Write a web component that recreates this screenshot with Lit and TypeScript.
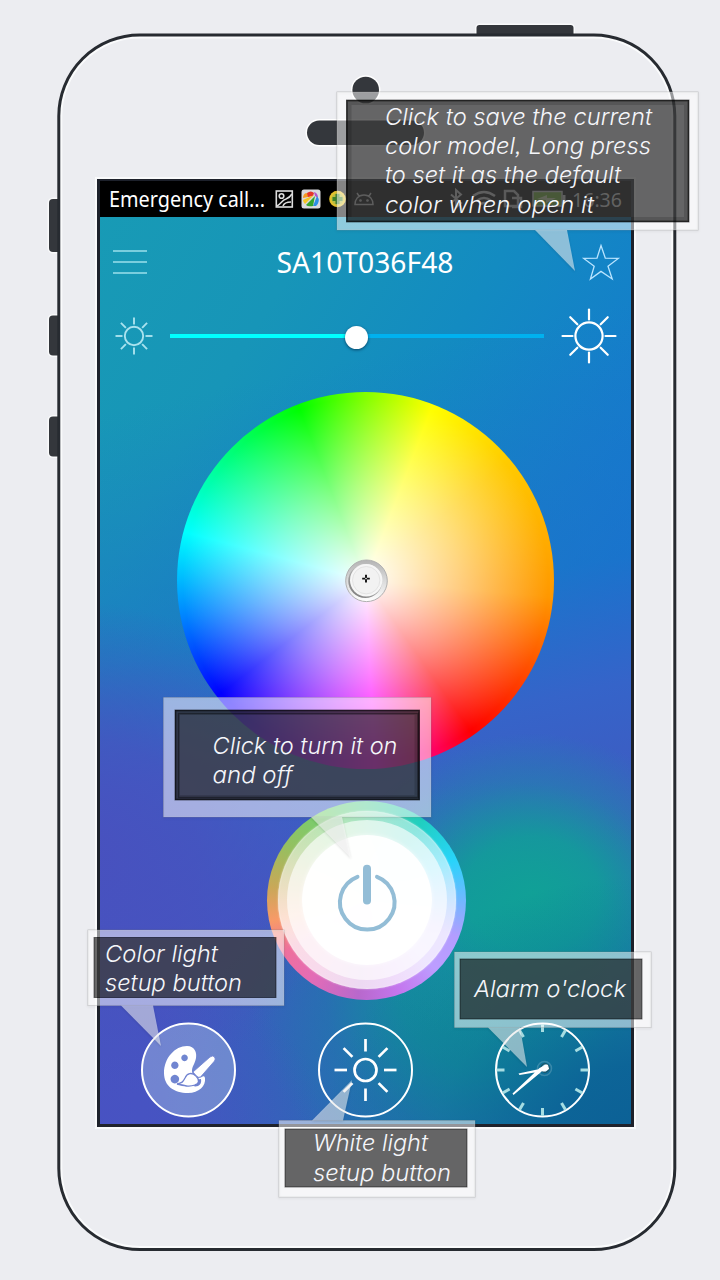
import { LitElement, html, svg, css } from "lit";
import { customElement } from "lit/decorators.js";

interface Line { t: string; x: number; y: number; w: number }
interface Note { box: number[]; inner: number[]; tail: string; bevel: boolean; lines: Line[] }

const notes: Note[] = [
  { box: [337, 92, 361, 138], inner: [346.5, 100, 342.5, 122], tail: "535,230 567,230 575,271", bevel: false, lines: [
    { t: "Click to save the current", x: 385, y: 125, w: 267 },
    { t: "color model, Long press", x: 385, y: 154, w: 266 },
    { t: "to set it as the default", x: 385, y: 183, w: 236 },
    { t: "color when open it", x: 385, y: 212.5, w: 209 }] },
  { box: [163.5, 697.5, 267.5, 119.5], inner: [175, 710, 244.5, 90], tail: "311,817 342,817 351,858", bevel: true, lines: [
    { t: "Click to turn it on", x: 212.5, y: 753.5, w: 185 },
    { t: "and off", x: 212.5, y: 782.5, w: 80 }] },
  { box: [88, 930, 196, 75.5], inner: [94, 937.5, 182, 60], tail: "121,1005.5 153,1005.5 161,1046", bevel: false, lines: [
    { t: "Color light", x: 105, y: 961.5, w: 113 },
    { t: "setup button", x: 105, y: 991, w: 137 }] },
  { box: [279, 1120.5, 196, 76.5], inner: [285, 1129, 182, 58], tail: "312,1120.5 343,1120.5 352,1080", bevel: false, lines: [
    { t: "White light", x: 313, y: 1151, w: 115 },
    { t: "setup button", x: 313, y: 1181, w: 138 }] },
  { box: [454.5, 952, 196.5, 75.5], inner: [460, 959, 182, 60], tail: "488,1027.5 520,1027.5 527,1067", bevel: false, lines: [
    { t: "Alarm o'clock", x: 474, y: 997, w: 152 }] },
];

const rays = (cx: number, cy: number, a: number, b: number) =>
  Array.from({ length: 8 }, (_, i) => {
    const c = Math.cos((i * Math.PI) / 4), s = Math.sin((i * Math.PI) / 4);
    return svg`<line x1=${cx + a * c} y1=${cy + a * s} x2=${cx + b * c} y2=${cy + b * s}></line>`;
  });

@customElement("color-wheel")
class ColorWheel extends LitElement {
  static styles = css`
    :host { display: grid; place-items: center; width: 377px; height: 377px; border-radius: 50%;
      background: radial-gradient(circle closest-side, #fff 0%, rgba(255,255,255,.5) 50%, rgba(255,255,255,0) 97%),
        conic-gradient(#84ff00 0deg, #ff0 21deg, #ffcb00 50deg, #ff9800 95deg, #ff4a00 120deg, #f00 145deg, #ff0070 160deg, #f0f 177deg, #7a00ff 205deg, #00f 232deg, #0080ff 258deg, #0ff 285deg, #00ff80 312deg, #0f0 339deg, #84ff00 360deg); }
    svg { display: block; }
  `;
  render() {
    return html`<svg width="46" height="46" viewBox="0 0 46 46">
      <defs>
        <linearGradient id="r" x1="0" y1="0" x2="0" y2="1"><stop offset="0" stop-color="#b4b4b4"></stop><stop offset=".55" stop-color="#dedede"></stop><stop offset="1" stop-color="#fff"></stop></linearGradient>
        <linearGradient id="q" x1="0.1" y1="1" x2=".8" y2="0"><stop offset="0" stop-color="#777"></stop><stop offset=".5" stop-color="#aaa"></stop><stop offset="1" stop-color="#eee"></stop></linearGradient>
      </defs>
      <circle cx="23.5" cy="23.8" r="20.8" fill="url(#r)" stroke="#b0b0b0" stroke-width="1"></circle>
      <circle cx="22.3" cy="24" r="17" fill="url(#q)"></circle>
      <circle cx="23.2" cy="23.2" r="16.2" fill="#f6f6f6"></circle>
      <circle cx="23.2" cy="23.2" r="13.7" fill="#f2f2f2" stroke="#e4e4e4" stroke-width="1"></circle>
      <path d="M23 17.800v7.600M19.200 21.600h7.600" stroke="#111" stroke-width="1.900"></path><circle cx="23" cy="21.600" r=".8" fill="#fff"></circle>
    </svg>`;
  }
}

@customElement("power-button")
class PowerButton extends LitElement {
  static styles = css`
    :host { display: grid; place-items: center; width: 199px; height: 199px; border-radius: 50%;
      background: conic-gradient(#5bd09a 0deg, #20cfc0 35deg, #28d4fa 65deg, #62bdff 85deg, #b39dff 112deg, #bd9dff 135deg, #c476ee 160deg, #b868cc 185deg, #e36cb6 215deg, #ee709c 238deg, #f89a68 258deg, #c9a858 278deg, #94c060 305deg, #73d070 335deg, #5bd09a 360deg); }
    .ring { display: grid; place-items: center; border-radius: 50%; }
    .a { width: 178px; height: 178px; background: radial-gradient(circle at 46% 52%, rgba(255,255,255,.75) 75%, rgba(255,255,255,.6) 100%); background: linear-gradient(rgba(255,255,255,.45), rgba(255,255,255,.75) 70%); box-shadow: 0 0 2px rgba(255,255,255,.6), inset 0 0 2px rgba(255,255,255,.7); }
    .b { width: 160px; height: 160px; background: rgba(255,255,255,.62); }
    .c { width: 130px; height: 130px; background: rgba(255,255,255,.94); box-shadow: 0 0 5px rgba(255,255,255,.6); }
    svg { display: block; }
  `;
  render() {
    return html`<div class="ring a"><div class="ring b"><div class="ring c">
      <svg width="70" height="76" viewBox="332 862 70 76" fill="none" stroke="#93bdd6" stroke-linecap="round">
        <path d="M357.500 876.800A27.300 27.300 0 1 0 377 876.800" stroke-width="4"></path>
        <path d="M367 868.800V900.500" stroke-width="8"></path>
      </svg></div></div></div>`;
  }
}

@customElement("callout-note")
class CalloutNote extends LitElement {
  static properties = { note: { attribute: false } };
  declare note: Note;
  static styles = css`
    :host { position: absolute; inset: 0; pointer-events: none; }
    svg { display: block; }
    .frame { fill: rgba(255,255,255,.52); }
    .tail { filter: drop-shadow(0 1px 1px rgba(0,0,0,.22)); }
    .edge { fill: none; stroke: rgba(130,130,130,.35); stroke-width: 1; filter: drop-shadow(0 1px 1px rgba(0,0,0,.25)); }
    .panel { fill: rgba(61,61,61,.774); stroke: rgba(0,0,0,.5); stroke-width: 1; }
    .glow { fill: none; stroke: rgba(0,0,0,.14); stroke-width: 5; }
    .bevel { fill: none; stroke: rgba(0,0,0,.4); stroke-width: 1.5; }
    .soft { fill: none; stroke: rgba(0,0,0,.45); stroke-width: 1.5; }
    text { font: italic 300 23px Inter, "Liberation Sans", sans-serif; font-feature-settings: "cv11", "ss03"; fill: #f5f6fa; }
  `;
  render() {
    const { box: [x, y, w, h], inner: [a, b, c, d], tail, lines, bevel } = this.note;
    const big = h > 100;
    return html`<svg width="720" height="1280" viewBox="0 0 720 1280">
      <rect class="edge" x=${x} y=${y} width=${w} height=${h}></rect>
      <path class="frame" fill-rule="evenodd" d="M${x} ${y}h${w}v${h}h${-w}zM${a} ${b}v${d}h${c}v${-d}z"></path>
      <polygon class="frame tail" points=${tail}></polygon>
      <rect class="panel" x=${a} y=${b} width=${c} height=${d}></rect>
      ${big ? svg`<rect class="soft" x=${a + 0.75} y=${b + 0.75} width=${c - 1.5} height=${d - 1.5}></rect><rect class="glow" x=${a + 2.5} y=${b + 2.5} width=${c - 5} height=${d - 5}></rect>` : null}
      ${bevel ? svg`<path class="bevel" d="M${a + 3.5} ${b + d - 2.5}V${b + 3.5}H${a + c - 1.5}V${b + d - 2.5}z"></path>` : null}
      ${lines.map((l) => svg`<text x=${l.x} y=${l.y} textLength=${l.w} lengthAdjust="spacingAndGlyphs">${l.t}</text>`)}
    </svg>`;
  }
}

@customElement("app-root")
class AppRoot extends LitElement {
  static styles = css`
    :host { display: block; position: relative; box-sizing: border-box; width: 720px; height: 1280px; padding: 179px 0 0 97px; background: #ecedf1; overflow: hidden; font-family: "Noto Sans", "Open Sans", sans-serif; }
    svg { display: block; overflow: visible; }
    .shell { position: absolute; inset: 0; }
    .screen { position: relative; box-sizing: border-box; width: 537px; height: 948px; border: 3px solid #1d212b; border-top-width: 2px; border-bottom-color: #20232c; display: flex; flex-direction: column; box-shadow: 0 0 0 2px rgba(255,255,255,.7);
      background:
        radial-gradient(ellipse 330px 270px at 551px 964px, #0b6095 0%, rgba(11,98,150,.9) 30%, rgba(12,110,150,.4) 65%, rgba(16,120,160,0) 100%),
        radial-gradient(ellipse 190px 160px at 432px 712px, rgba(16,162,150,.95) 0%, rgba(16,160,152,.85) 35%, rgba(24,145,165,.45) 68%, rgba(40,120,185,0) 100%),
        radial-gradient(ellipse 250px 210px at 400px 810px, rgba(14,152,150,.95) 0%, rgba(14,148,152,.75) 40%, rgba(24,130,165,.35) 70%, rgba(40,110,180,0) 100%),
        radial-gradient(ellipse 390px 260px at 440px 900px, rgba(20,124,165,.8) 0%, rgba(30,115,175,.65) 50%, rgba(50,95,188,0) 100%),
        linear-gradient(168deg, rgba(24,120,200,0) 22%, rgba(32,112,200,.55) 46%, rgba(57,98,200,.9) 58%, rgba(60,94,196,.95) 64%, #4357c2 74%),
        linear-gradient(122deg, #189bb5 0%, #1795b8 22%, #138bc1 40%, #147ecb 58%, #1176d4 72%); }
    .screen::before { content: ""; position: absolute; inset: 0; background: radial-gradient(ellipse 260px 250px at -20px 670px, rgba(74,79,190,.9) 0%, rgba(73,80,190,.7) 45%, rgba(70,82,190,0) 100%), radial-gradient(ellipse 220px 150px at 0px 930px, rgba(74,80,194,.7), rgba(72,82,192,0)); }
    .screen > * { position: relative; }
    .status { display: flex; align-items: center; height: 35.5px; padding: 0 9px; background: #000; box-sizing: border-box; flex: none; }
    .head { display: flex; justify-content: space-between; align-items: center; height: 46px; padding: 22px 11px 0 13px; flex: none; }
    .slider { display: flex; align-items: center; height: 66px; padding: 18.5px 12px 0 14px; flex: none; }
    .track { display: flex; align-items: center; width: 374px; height: 4.5px; margin: 0 15px 0 15.5px; background: linear-gradient(90deg, #0ff 50%, #00b1ef 50%); flex: none; }
    .thumb { width: 23px; height: 23px; margin: 3px 0 0 175.5px; border-radius: 50%; background: #fff; box-shadow: 0 1px 3px rgba(0,30,60,.65); flex: none; }
    color-wheel { margin: 22.5px 0 0 77px; flex: none; }
    power-button { margin: 32px 0 0 167px; flex: none; }
    .nav { display: grid; grid-template-columns: repeat(3, 177px); padding-top: 22px; }
    .nav svg { margin: 0 auto; }
  `;
  render() {
    return html`
      <svg class="shell" width="720" height="1280" viewBox="0 0 720 1280">
        <g fill="#34373c" stroke="#f9fafb" stroke-width="3" paint-order="stroke">
          <path d="M476.500 36V28a3 3 0 0 1 3-3h91a3 3 0 0 1 3 3v8z"></path>
          <path d="M59 199h-6a4 4 0 0 0-4 4v45a4 4 0 0 0 4 4h6z"></path>
          <path d="M59 315.500h-6a4 4 0 0 0-4 4v32a4 4 0 0 0 4 4h6z"></path>
          <path d="M59 416.500h-6a4 4 0 0 0-4 4v32a4 4 0 0 0 4 4h6z"></path>
        </g>
        <rect x="58.800" y="35" width="616" height="1214.500" rx="81" fill="#ecedf1"></rect>
        <rect x="60.800" y="37" width="612" height="1210.500" rx="79" fill="none" stroke="#fafbfc" stroke-width="3"></rect>
        <rect x="58.800" y="35" width="616" height="1214.500" rx="81" fill="none" stroke="#272b31" stroke-width="3"></rect>
        <g fill="#34373c" stroke="#fff" stroke-width="3" paint-order="stroke">
          <circle cx="365.700" cy="90" r="13.300"></circle>
          <rect x="307" y="120.500" width="117" height="24.500" rx="12.250"></rect>
        </g>
      </svg>
      <main class="screen">
        <div class="status">
          <svg width="513" height="35" viewBox="109 181 513 35">
            <text x="109" y="207" font-size="21" fill="#fff" textLength="156" lengthAdjust="spacingAndGlyphs">Emergency call...</text>
            <g fill="none" stroke="#ddd" stroke-width="1.600"><rect x="276.300" y="191" width="16" height="16"></rect><circle cx="281.500" cy="196" r="2.300"></circle><path d="M277 206c4-2 5-6 9-7 3-1 4-2 6-5M283 206c1-3 4-4 8-4"></path></g>
            <rect x="301.500" y="189.500" width="19" height="19" rx="2.500" fill="#d9dadd"></rect>
            <g transform="translate(311 199)"><path d="M-8-1q0-4 3-5l3 1-1 3z" fill="#f59a22"></path><path d="M-4-6q4-3 7 0l-1 3-5 1z" fill="#e5352b"></path><path d="M3-7q4 1 4 6l-3-2z" fill="#b453c8"></path><path d="M6-3q4 5-1 10l-3 0z" fill="#2b8ee4"></path><path d="M4-3L2 7q-5 1-7-1z" fill="#33a42c"></path><path d="M3-4L-6 5q-2-2-2-4z" fill="#f5c624"></path></g>
            <circle cx="337.500" cy="199" r="8.300" fill="#e4c32d"></circle><circle cx="337.500" cy="199" r="6" fill="#b8bd43"></circle><path d="M337.500 194v10M332.500 199h10" stroke="#3b812c" stroke-width="4"></path>
            <g fill="none" stroke="#c9c9c9" stroke-width="1.500"><path d="M355 204.500c0-5 3-9.500 9-9.500s9 4.500 9 9.500zM359 196l-2-3M369 196l2-3"></path><circle cx="360.500" cy="200.500" r=".6"></circle><circle cx="367.500" cy="200.500" r=".6"></circle></g>
            <path d="M451 194.500l10 8.500-5 4.500V190l5 4.500-10 8.500" fill="none" stroke="#ccc" stroke-width="2"></path>
            <g fill="none" stroke="#ccc" stroke-width="2.500"><path d="M473 196q11-8 22 0M477 200.500q7-5 14 0M481 204q3-2 6 0"></path></g>
            <path d="M505 191h9l4 4v11h-13zM512 198h9v9h-9" fill="none" stroke="#bbb" stroke-width="2.500"></path>
            <rect x="533" y="191.500" width="29" height="14.500" fill="#6eb42a" stroke="#ccc" stroke-width="1.500"></rect><path d="M564 195v8" stroke="#ccc" stroke-width="3"></path><path d="M537 199l10-4v3h9l-10 5v-3z" fill="#d5e5b0"></path>
            <text x="572" y="207" font-size="20.500" fill="#ddd" textLength="50" lengthAdjust="spacingAndGlyphs">16:36</text>
          </svg>
        </div>
        <div class="head">
          <svg width="34" height="26" viewBox="0 0 34 26" stroke="#9be0ec" stroke-width="1.500"><path d="M0 2H34M0 13H34M0 24H34"></path></svg>
          <svg width="178" height="38" viewBox="-1.500 0 178 38"><text x="0" y="29.500" font-size="29" fill="#fff" textLength="177" lengthAdjust="spacingAndGlyphs">SA10T036F48</text></svg>
          <svg width="39" height="40" viewBox="581 242 39 40" fill="none" stroke="#b9e4ff" stroke-width="1.300"><path d="M601 245.500l4.300 12.600 13 .3-10.300 7.900 4.200 12.700-11.200-7.600-10.600 7.600 3.800-12.700-10.500-7.900 13.300-.3z"></path></svg>
        </div>
        <div class="slider">
          <svg width="40" height="40" viewBox="-20 -20 40 40" fill="none" stroke="#a9e2ee" stroke-width="1.900" style="flex:none"><circle r="9.200"></circle>${rays(0, 0, 11.5, 18.5)}</svg>
          <div class="track"><div class="thumb"></div></div>
          <svg width="60" height="60" viewBox="-30 -30 60 60" fill="none" stroke="#fff" stroke-width="2.200" stroke-linecap="round"><circle r="13.600"></circle>${rays(0, 0, 16.5, 26.5)}</svg>
        </div>
        <color-wheel></color-wheel>
        <power-button></power-button>
        <div class="nav">
          <svg width="96" height="96" viewBox="141 1021 96 96">
            <circle cx="188.500" cy="1069" r="46.500" fill="rgba(160,185,225,.48)" stroke="#fff" stroke-width="2"></circle>
            <path fill="#fff" fill-rule="evenodd" d="M187 1045c8 0 10 7 9 12-1 6-4 8-4 13 0 3 2 6 6 7 4 0 6-4 7 0 1 8-6 15-17 15-14 0-24-7-24-20 0-15 11-27 23-27zM184.500 1053.600a3.300 3.300 0 1 0 .1 0zM174.800 1060.600a3.700 3.700 0 1 0 .1 0zM174.800 1073.800a4.300 4.300 0 1 0 .1 0z"></path>
            <path d="M188 1080q4 7 10 5 4-2 3-7" fill="#7082d0"></path>
            <path d="M177 1083c5-1 6-2 8-6 2-5 7-6 11-2s3 8-1 9c-6 2-9 1-18-1z" fill="#fff" stroke="#7082d0" stroke-width="1.300"></path>
            <path d="M193 1071l17-15q3-2 4.500 0t0 4l-14 16q-2 1-4-1z" fill="#fff" stroke="#7082d0" stroke-width=".8"></path>
          </svg>
          <svg width="96" height="96" viewBox="-47.500 -48 96 96" fill="none" stroke="#fff" stroke-width="2.700"><circle r="46.500" stroke-width="2"></circle><circle r="11"></circle>${rays(0, 0, 18.5, 31)}</svg>
          <svg width="96" height="96" viewBox="-47.500 -48 96 96" fill="none" stroke="#fff">
            <circle r="46.500" stroke-width="2"></circle>
            ${Array.from({ length: 12 }, (_, i) => svg`<path d="M0-46V-38" stroke="#a6dde2" stroke-width="3" transform="rotate(${i * 30})"></path>`)}
            <circle cx="2" cy="-1.500" r="7" stroke="rgba(255,255,255,.18)" stroke-width="1.500"></circle><circle cx="2.500" cy="-2" r="4.300" stroke="#24505c" stroke-width="1"></circle>
            <path d="M-30 23.500L-3-2 1-4 1 0-29 25zM-24 3.500L-3-1 4-4 1 1-23 5z" fill="#fff" stroke="none"></path>
            <path d="M-2-1L2-5H5L6-1 3 1H0z" fill="#fff" stroke-width="1"></path>
          </svg>
        </div>
      </main>
      ${notes.map((n) => html`<callout-note .note=${n}></callout-note>`)}
    `;
  }
}
